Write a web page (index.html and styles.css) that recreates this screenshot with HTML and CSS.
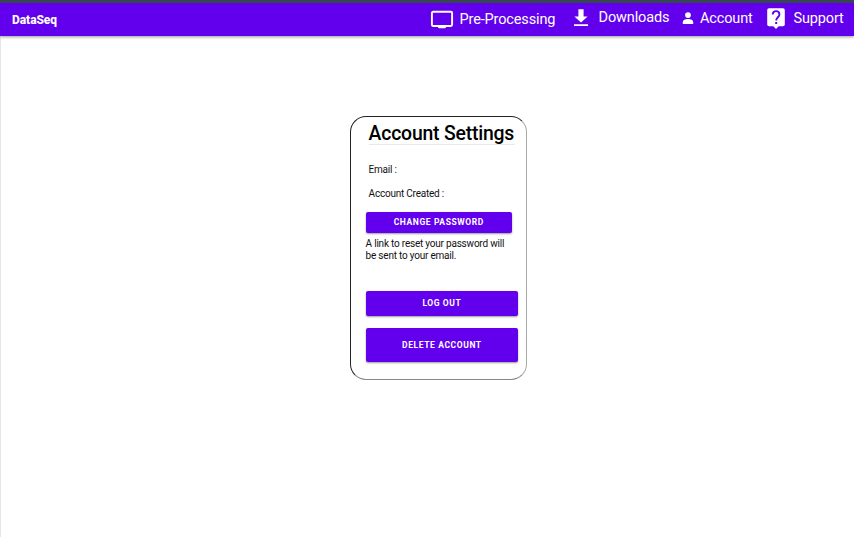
FILE: index.html
```html
<!DOCTYPE html>
<html lang="en">
<head>
<meta charset="utf-8">
<title>DataSeq</title>
<link rel="stylesheet" href="styles.css">
</head>
<body>
<header class="topbar">
  <span class="brand">DataSeq</span>
  <nav class="nav">
    <a class="item processing">
      <svg class="icon" width="24" height="20" viewBox="0 0 24 20"><rect x="1.900" y="1.800" width="20.200" height="14.200" rx="1.200" fill="none" stroke="#fff" stroke-width="1.900"/><path d="M8 16h8v1.500l-1 .8H9l-1-.8z" fill="#fff"/></svg>
      <span>Pre-Processing</span>
    </a>
    <a class="item downloads">
      <svg class="icon" width="16" height="18" viewBox="0 0 16 18"><path d="M5.400 0.200h5.200v7.200h4L8 13.500 1.400 7.400h4zM1 15.200h14v1.900H1z" fill="#fff"/></svg>
      <span>Downloads</span>
    </a>
    <a class="item account">
      <svg class="icon" width="12" height="12" viewBox="0 0 12 12"><circle cx="6" cy="3.100" r="2.900" fill="#fff"/><path d="M.8 12v-1.800C.8 8 3 7 6 7s5.200 1 5.200 3.200V12z" fill="#fff"/></svg>
      <span>Account</span>
    </a>
    <a class="item support">
      <svg class="icon" width="18" height="21" viewBox="0 0 18 21"><path d="M2 .3h14q1.800 0 1.800 1.800v14.300q0 1.800-1.800 1.800h-4.300L9 20.900l-2.700-2.700H2Q.2 18.200.2 16.400V2.100Q.2.300 2 .3z" fill="#fff"/><path d="M5.700 6.600C5.700 4.400 7.100 3.100 9 3.100s3.400 1.300 3.400 3.300C12.400 9.100 9.200 9.400 9.200 12.500" fill="none" stroke="#6200ee" stroke-width="1.900"/><rect x="8.200" y="14" width="2" height="2" fill="#6200ee"/></svg>
      <span>Support</span>
    </a>
  </nav>
</header>
<main class="page">
  <section class="card">
    <h1 class="title">Account Settings</h1>
    <p class="field">Email :</p>
    <p class="field">Account Created :</p>
    <button class="button change">CHANGE PASSWORD</button>
    <p class="hint">A link to reset your password will<br>be sent to your email.</p>
    <button class="button logout">LOG OUT</button>
    <button class="button delete">DELETE ACCOUNT</button>
  </section>
</main>
</body>
</html>
```
FILE: styles.css
```css
* { box-sizing: border-box; }
html, body { height: 100%; }
body {
  margin: 0;
  overflow: hidden;
  display: flex;
  flex-direction: column;
  background: #fff;
  color: #111;
  font-family: Roboto, sans-serif;
}
.topbar {
  flex: none;
  display: flex;
  justify-content: space-between;
  height: 36px;
  padding: 0 0 0 12px;
  border-top: 3px solid #37474f;
  background: #6200ee;
  color: #fff;
  box-shadow: 0 1px 3px rgba(0, 0, 0, .4);
  z-index: 1;
}
.brand {
  padding-top: 9px;
  font-size: 12px;
  line-height: 16px;
  font-weight: 800;
  letter-spacing: -.05px;
}
.nav { display: flex; width: 424px; }
.item {
  display: flex;
  align-items: flex-start;
  font-size: 14.5px;
  line-height: 18px;
  letter-spacing: -.14px;
  white-space: nowrap;
}
.icon { display: block; flex: none; }
.item span { margin-top: 6px; }
.processing { width: 143px; gap: 5.5px; }
.processing .icon { margin-top: 7px; }
.processing span { margin-top: 8px; }
.downloads { width: 109px; gap: 9.5px; }
.downloads .icon { margin-top: 6px; }
.account { width: 85px; gap: 6px; }
.account .icon { margin-top: 9px; }
.account span, .support span { margin-top: 7px; }
.support { gap: 8.5px; }
.support .icon { margin-top: 5px; }
.page {
  flex: 1;
  padding: 80px 0 0 349px;
  border-left: 1px solid #e6e6e6;
}
.card {
  width: 177.4px;
  height: 264.4px;
  padding: 5px 8px 0 14.6px;
  border: 1px solid #222;
  border-right-color: #aaa;
  border-bottom-color: #888;
  border-radius: 16px;
}
.title {
  width: 146px;
  height: 23px;
  margin: 0 0 17px 3px;
  border-bottom: 1px solid #e9e9e9;
  font-size: 19.4px;
  line-height: 23px;
  font-weight: 500;
  letter-spacing: -.2px;
  white-space: nowrap;
  color: #000;
}
.field {
  margin: 0 0 8px 3px;
  font-size: 10px;
  line-height: 16px;
  letter-spacing: -.22px;
}
.button {
  display: block;
  width: 152.6px;
  padding: 0;
  border: 0;
  border-radius: 2px;
  background: #6200ee;
  color: #fff;
  font: 700 8.5px/12px Roboto, sans-serif;
  letter-spacing: .6px;
  box-shadow: 0 1px 2px rgba(0, 0, 0, .4);
}
.change { width: 146.5px; height: 21px; margin-top: 10px; padding-bottom: 1px; }
.hint {
  margin: 5px 0 29px;
  font-size: 10px;
  line-height: 12px;
  letter-spacing: -.21px;
  white-space: nowrap;
}
.logout { height: 25px; margin-bottom: 12px; padding-bottom: 1px; }
.delete { height: 34px; }
```
